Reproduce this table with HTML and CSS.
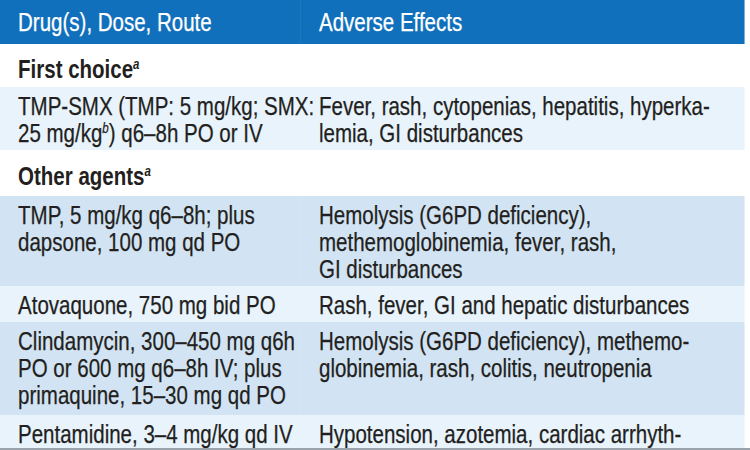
FILE: index.html
```html
<!DOCTYPE html>
<html>
<head>
<meta charset="utf-8">
<link rel="stylesheet" href="styles.css">
</head>
<body>
<div class="frame">
<table class="drug-table">
  <thead>
    <tr class="head-row">
      <th class="col-drug">Drug(s), Dose, Route</th>
      <th class="col-effects">Adverse Effects</th>
    </tr>
  </thead>
  <tbody>
    <tr class="section-row first-section">
      <td colspan="2">First choice<sup class="note">a</sup></td>
    </tr>
    <tr class="row light">
      <td>TMP-SMX (TMP: 5 mg/kg; SMX:<br>25 mg/kg<sup class="note">b</sup>) q6–8h PO or IV</td>
      <td>Fever, rash, cytopenias, hepatitis, hyperka-<br>lemia, GI disturbances</td>
    </tr>
    <tr class="section-row other-section">
      <td colspan="2">Other agents<sup class="note">a</sup></td>
    </tr>
    <tr class="row dark">
      <td>TMP, 5 mg/kg q6–8h; plus<br>dapsone, 100 mg qd PO</td>
      <td>Hemolysis (G6PD deficiency),<br>methemoglobinemia, fever, rash,<br>GI disturbances</td>
    </tr>
    <tr class="row light">
      <td>Atovaquone, 750 mg bid PO</td>
      <td>Rash, fever, GI and hepatic disturbances</td>
    </tr>
    <tr class="row dark tall">
      <td>Clindamycin, 300–450 mg q6h<br>PO or 600 mg q6–8h IV; plus<br>primaquine, 15–30 mg qd PO</td>
      <td>Hemolysis (G6PD deficiency), methemo-<br>globinemia, rash, colitis, neutropenia</td>
    </tr>
    <tr class="row light">
      <td>Pentamidine, 3–4 mg/kg qd IV</td>
      <td>Hypotension, azotemia, cardiac arrhyth-<br>mias, pancreatitis</td>
    </tr>
  </tbody>
</table>
</div>
</body>
</html>
```
FILE: styles.css
```css
html, body {
  margin: 0;
  padding: 0;
  background: #ffffff;
}

.frame {
  width: 750px;
  height: 450px;
  overflow: hidden;
  position: relative;
  border-bottom: 2px solid #9aa3ab;
  box-sizing: border-box;
}

.drug-table {
  width: 908px;
  border-collapse: collapse;
  table-layout: fixed;
  font-family: "Liberation Sans", Arial, sans-serif;
  font-size: 25px;
  line-height: 27px;
  color: #231f20;
  white-space: nowrap;
  -webkit-text-stroke: 0.25px currentColor;
  transform: scaleX(0.82);
  transform-origin: 0 0;
}

.drug-table th,
.drug-table td {
  padding: 0 0 0 22px;
  text-align: left;
  vertical-align: top;
}

.col-drug {
  width: 367px;
}

.head-row {
  background: #1170bb;
  color: #ffffff;
}

.head-row th {
  font-weight: normal;
  height: 44px;
  padding-top: 9px;
  padding-bottom: 0;
  box-sizing: border-box;
}

.section-row td {
  font-weight: bold;
  background: #ffffff;
  -webkit-text-stroke: 0;
}

.first-section td {
  height: 43px;
  padding-top: 12px;
  box-sizing: border-box;
}

.other-section td {
  height: 46px;
  padding-top: 13px;
  box-sizing: border-box;
}

.row td {
  padding-top: 6px;
  padding-bottom: 3px;
}

.row.tall td {
  padding-bottom: 6px;
}

.row.light {
  background: #e8f3fc;
}

.row.dark {
  background: #d2e4f3;
}

.note {
  font-style: italic;
  font-weight: bold;
  font-size: 14px;
  line-height: 0;
  vertical-align: 9px;
}

.row .note {
  font-weight: normal;
}
```
